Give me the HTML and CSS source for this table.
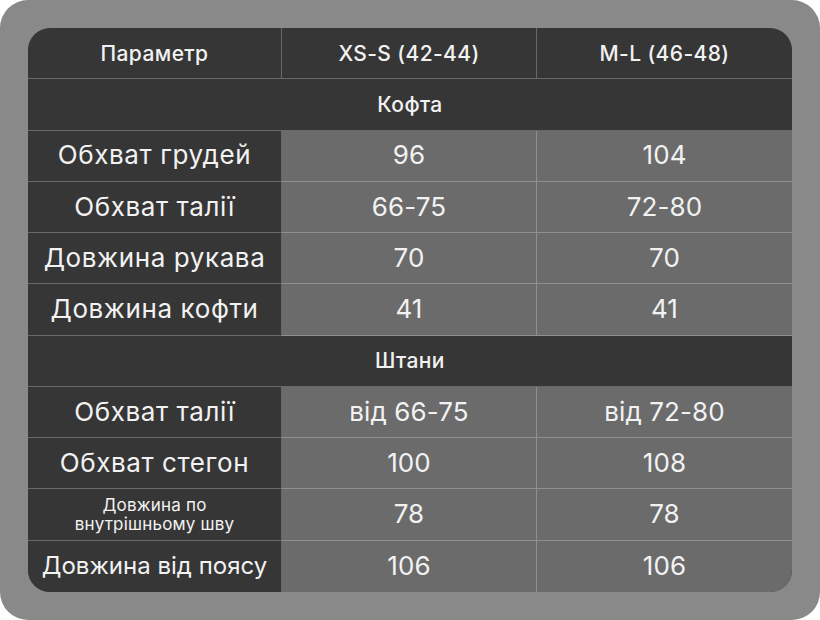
FILE: index.html
```html
<!DOCTYPE html>
<html lang="uk">
<head>
<meta charset="utf-8">
<link rel="stylesheet" href="styles.css">
</head>
<body>
<div class="panel">
  <div class="table">
    <div class="cell head">Параметр</div>
    <div class="cell head">XS-S (42-44)</div>
    <div class="cell head last">M-L (46-48)</div>

    <div class="cell section">Кофта</div>

    <div class="cell label">Обхват грудей</div>
    <div class="cell val">96</div>
    <div class="cell val last">104</div>

    <div class="cell label">Обхват талії</div>
    <div class="cell val">66-75</div>
    <div class="cell val last">72-80</div>

    <div class="cell label">Довжина рукава</div>
    <div class="cell val">70</div>
    <div class="cell val last">70</div>

    <div class="cell label">Довжина кофти</div>
    <div class="cell val">41</div>
    <div class="cell val last">41</div>

    <div class="cell section">Штани</div>

    <div class="cell label">Обхват талії</div>
    <div class="cell val">від 66-75</div>
    <div class="cell val last">від 72-80</div>

    <div class="cell label">Обхват стегон</div>
    <div class="cell val">100</div>
    <div class="cell val last">108</div>

    <div class="cell label small">Довжина по<br>внутрішньому шву</div>
    <div class="cell val">78</div>
    <div class="cell val last">78</div>

    <div class="cell label bottom compact">Довжина від поясу</div>
    <div class="cell val bottom">106</div>
    <div class="cell val last bottom">106</div>
  </div>
</div>
</body>
</html>
```

FILE: styles.css
```css
* { box-sizing: border-box; }
html, body { margin: 0; padding: 0; background: #ffffff; }
.panel {
  width: 820px;
  height: 620px;
  background: #898989;
  border-radius: 28px;
  padding: 28px;
}
.table {
  width: 764px;
  height: 564px;
  border-radius: 22px;
  overflow: hidden;
  background: #363636;
  display: grid;
  grid-template-columns: 254px 255px 255px;
  grid-template-rows: repeat(11, 1fr);
  font-family: Inter, "Noto Sans", sans-serif;
  color: #f2f2f2;
}
.cell {
  display: flex;
  align-items: center;
  justify-content: center;
  text-align: center;
  border-bottom: 1px solid rgba(255,255,255,0.25);
  border-right: 1px solid rgba(255,255,255,0.25);
  font-size: 26px;
  letter-spacing: 0.6px;
  line-height: 1.1;
}
.cell.last { border-right: none; }
.cell.bottom { border-bottom: none; }
.head, .section {
  font-size: 21px;
  font-weight: 500;
  letter-spacing: 0.4px;
}
.section {
  grid-column: 1 / 4;
  border-right: none;
}
.label { background: #363636; }
.val {
  background: #6b6b6b;
  letter-spacing: 0.1px;
}
.small {
  font-size: 17px;
  letter-spacing: 0.2px;
  line-height: 1.1;
}
.compact {
  font-size: 24px;
  letter-spacing: 0;
}
```
